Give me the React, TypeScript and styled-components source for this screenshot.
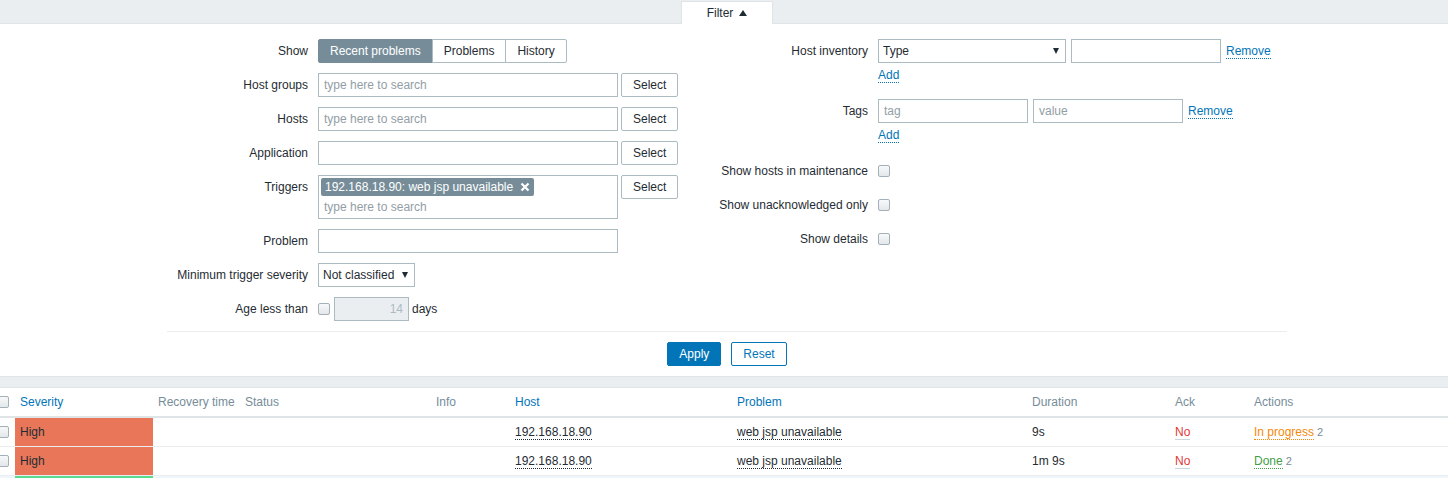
import React from "react";
import styled, { createGlobalStyle } from "styled-components";

const GlobalStyle = createGlobalStyle`
  html, body {
    margin: 0;
    padding: 0;
    background: #ffffff;
    overflow: hidden;
  }
  body {
    font-family: "Liberation Sans", Arial, sans-serif;
    font-size: 12px;
    color: #1f2c33;
  }
  * {
    box-sizing: border-box;
  }
`;

const Page = styled.div`
  width: 1470px;
  margin-left: -8px;
`;

const TabBar = styled.div`
  height: 24px;
  background: #ebeef0;
  border-bottom: 1px solid #dfe4e7;
  display: flex;
  justify-content: center;
`;

const Tab = styled.div`
  width: 92px;
  height: 23px;
  margin-top: 1px;
  background: #ffffff;
  border: 1px solid #dfe4e7;
  border-bottom: none;
  display: flex;
  align-items: center;
  justify-content: center;
  gap: 6px;
`;

const ArrowUp = styled.span`
  width: 0;
  height: 0;
  border-left: 4px solid transparent;
  border-right: 4px solid transparent;
  border-bottom: 6px solid #1f2c33;
`;

const FilterPanel = styled.div`
  background: #ffffff;
  border-bottom: 1px solid #dfe4e7;
  padding: 15px 0 10px;
`;

const FormWrap = styled.div`
  width: 1120px;
  margin: 0 auto;
`;

const Columns = styled.div`
  display: grid;
  grid-template-columns: 540px 580px;
`;

const Column = styled.div`
  display: flex;
  flex-direction: column;
  gap: 10px;
`;

const Row = styled.div`
  display: flex;
  align-items: flex-start;
  gap: 10px;
`;

const Label = styled.label<{ $w?: number }>`
  width: ${(p) => p.$w ?? 141}px;
  flex: none;
  text-align: right;
  line-height: 24px;
  white-space: nowrap;
`;

const Field = styled.div<{ $gap?: number }>`
  display: flex;
  align-items: flex-start;
  gap: ${(p) => p.$gap ?? 3}px;
  line-height: 24px;
`;

const Stack = styled.div`
  display: flex;
  flex-direction: column;
`;

const AddLine = styled.div`
  height: 26px;
  line-height: 24px;
`;

const Segments = styled.div`
  display: flex;
`;

const Segment = styled.span<{ $active?: boolean }>`
  height: 24px;
  line-height: 22px;
  padding: 0 11px;
  border: 1px solid ${(p) => (p.$active ? "#768d99" : "#acbbc2")};
  background: ${(p) => (p.$active ? "#768d99" : "#ffffff")};
  color: ${(p) => (p.$active ? "#ffffff" : "#1f2c33")};
  white-space: nowrap;
  & + & {
    margin-left: -1px;
  }
  &:first-child {
    border-radius: 2px 0 0 2px;
  }
  &:last-child {
    border-radius: 0 2px 2px 0;
  }
`;

const TextInput = styled.input<{ $w: number }>`
  width: ${(p) => p.$w}px;
  height: 24px;
  margin: 0;
  padding: 0 5px;
  border: 1px solid #acbbc2;
  border-radius: 0;
  font: inherit;
  color: #1f2c33;
  background: #ffffff;
  outline: none;
  &::placeholder {
    color: #929ea5;
  }
  &:disabled {
    background: #ebeef0;
    color: #acbbc2;
    text-align: right;
  }
`;

const Button = styled.button<{ $variant?: "grey" | "main" | "alt" }>`
  height: 24px;
  margin: 0;
  padding: 0 11px;
  font: inherit;
  line-height: 22px;
  border-radius: 2px;
  cursor: pointer;
  border: 1px solid
    ${(p) => (p.$variant === "grey" || !p.$variant ? "#acbbc2" : "#0275b8")};
  background: ${(p) => (p.$variant === "main" ? "#0275b8" : "#ffffff")};
  color: ${(p) =>
    p.$variant === "main" ? "#ffffff" : p.$variant === "alt" ? "#0275b8" : "#1f2c33"};
`;

const SelectBox = styled.div<{ $w: number }>`
  width: ${(p) => p.$w}px;
  height: 24px;
  border: 1px solid #acbbc2;
  padding: 0 6px 0 4px;
  display: flex;
  align-items: center;
  justify-content: space-between;
  line-height: 22px;
  background: #ffffff;
`;

const ArrowDown = styled.span`
  width: 0;
  height: 0;
  border-left: 3.5px solid transparent;
  border-right: 3.5px solid transparent;
  border-top: 6px solid #1f2c33;
`;

const MultiSelect = styled.div`
  width: 300px;
  height: 44px;
  border: 1px solid #acbbc2;
  padding: 2px 2px 0;
  display: flex;
  flex-direction: column;
  align-items: flex-start;
`;

const Chip = styled.span`
  height: 18px;
  padding: 0 4px;
  background: #768d99;
  color: #ffffff;
  border-radius: 2px;
  display: inline-flex;
  align-items: center;
  gap: 7px;
  line-height: 18px;
  white-space: nowrap;
`;

const MultiPlaceholder = styled.span`
  height: 22px;
  line-height: 22px;
  padding-left: 3px;
  color: #929ea5;
`;

const Check = styled.span`
  display: block;
  width: 12px;
  height: 12px;
  border: 1px solid #a3b0b7;
  border-radius: 2px;
  background: linear-gradient(#f7f8f9, #e4e8ea);
  flex: none;
`;

const CheckCell = styled.div`
  height: 24px;
  display: flex;
  align-items: center;
  gap: 4px;
`;

const Link = styled.a`
  color: #0275b8;
  text-decoration: none;
  border-bottom: 1px dotted #0275b8;
  cursor: pointer;
`;

const Footer = styled.div`
  margin-top: 10px;
  padding-top: 10px;
  border-top: 1px solid #ebeef0;
  display: flex;
  justify-content: center;
  gap: 10px;
`;

const Band = styled.div`
  height: 11px;
  background: #ebeef0;
  border-bottom: 1px solid #dfe4e7;
`;

const Table = styled.table`
  width: 100%;
  table-layout: fixed;
  border-collapse: separate;
  border-spacing: 0;
  background: #ffffff;
`;

const Th = styled.th<{ $sort?: boolean }>`
  text-align: left;
  font-weight: normal;
  padding: 6px 5px;
  line-height: 16px;
  color: ${(p) => (p.$sort ? "#0275b8" : "#768d99")};
  border-bottom: 2px solid #dfe4e7;
  vertical-align: middle;
  white-space: nowrap;
  overflow: hidden;
`;

const Td = styled.td<{ $bg?: string }>`
  padding: 6px 5px;
  line-height: 16px;
  height: 29px;
  border-bottom: 1px solid #ebeef0;
  vertical-align: middle;
  white-space: nowrap;
  background: ${(p) => p.$bg ?? "transparent"};
`;

const Tr = styled.tr<{ $bg?: string }>`
  background: ${(p) => p.$bg ?? "#ffffff"};
`;

const Dotted = styled.span<{ $color?: string }>`
  color: ${(p) => p.$color ?? "#1f2c33"};
  border-bottom: 1px dotted ${(p) => p.$color ?? "#1f2c33"};
`;

const AckNo = styled.span`
  color: #e33734;
  border-bottom: 1px solid #ccd5d9;
`;

const Count = styled.span`
  color: #768d99;
  font-size: 11px;
  margin-left: 3px;
`;

const CloseIcon = () => (
  <svg width="10" height="10" viewBox="0 0 10 10">
    <path d="M1.5 1.5 L8.5 8.5 M8.5 1.5 L1.5 8.5" stroke="#ffffff" strokeWidth="2.2" />
  </svg>
);

const cols = [23, 138, 87, 191, 79, 222, 295, 143, 79];

const problems = [
  { duration: "9s", action: "In progress", actionColor: "#f48909", count: 2 },
  { duration: "1m 9s", action: "Done", actionColor: "#429e47", count: 2 },
];

const RIGHT_LABEL = 161;

const App = () => {
  return (
    <Page>
      <GlobalStyle />
      <TabBar>
        <Tab>
          Filter
          <ArrowUp />
        </Tab>
      </TabBar>
      <FilterPanel>
        <FormWrap>
          <Columns>
            <Column>
              <Row>
                <Label>Show</Label>
                <Segments>
                  <Segment $active>Recent problems</Segment>
                  <Segment>Problems</Segment>
                  <Segment>History</Segment>
                </Segments>
              </Row>
              <Row>
                <Label>Host groups</Label>
                <Field>
                  <TextInput $w={300} placeholder="type here to search" />
                  <Button $variant="grey">Select</Button>
                </Field>
              </Row>
              <Row>
                <Label>Hosts</Label>
                <Field>
                  <TextInput $w={300} placeholder="type here to search" />
                  <Button $variant="grey">Select</Button>
                </Field>
              </Row>
              <Row>
                <Label>Application</Label>
                <Field>
                  <TextInput $w={300} />
                  <Button $variant="grey">Select</Button>
                </Field>
              </Row>
              <Row>
                <Label>Triggers</Label>
                <Field>
                  <MultiSelect>
                    <Chip>
                      192.168.18.90: web jsp unavailable
                      <CloseIcon />
                    </Chip>
                    <MultiPlaceholder>type here to search</MultiPlaceholder>
                  </MultiSelect>
                  <Button $variant="grey">Select</Button>
                </Field>
              </Row>
              <Row>
                <Label>Problem</Label>
                <Field>
                  <TextInput $w={300} />
                </Field>
              </Row>
              <Row>
                <Label>Minimum trigger severity</Label>
                <SelectBox $w={97}>
                  Not classified
                  <ArrowDown />
                </SelectBox>
              </Row>
              <Row>
                <Label>Age less than</Label>
                <CheckCell>
                  <Check />
                  <Field>
                    <TextInput $w={75} disabled defaultValue="14" />
                    <span>days</span>
                  </Field>
                </CheckCell>
              </Row>
            </Column>
            <Column>
              <Row>
                <Label $w={RIGHT_LABEL}>Host inventory</Label>
                <Stack>
                  <Field $gap={5}>
                    <SelectBox $w={188}>
                      Type
                      <ArrowDown />
                    </SelectBox>
                    <TextInput $w={150} />
                    <span>
                      <Link>Remove</Link>
                    </span>
                  </Field>
                  <AddLine>
                    <Link>Add</Link>
                  </AddLine>
                </Stack>
              </Row>
              <Row>
                <Label $w={RIGHT_LABEL}>Tags</Label>
                <Stack>
                  <Field $gap={5}>
                    <TextInput $w={150} placeholder="tag" />
                    <TextInput $w={150} placeholder="value" />
                    <span>
                      <Link>Remove</Link>
                    </span>
                  </Field>
                  <AddLine>
                    <Link>Add</Link>
                  </AddLine>
                </Stack>
              </Row>
              <Row>
                <Label $w={RIGHT_LABEL}>Show hosts in maintenance</Label>
                <CheckCell>
                  <Check />
                </CheckCell>
              </Row>
              <Row>
                <Label $w={RIGHT_LABEL}>Show unacknowledged only</Label>
                <CheckCell>
                  <Check />
                </CheckCell>
              </Row>
              <Row>
                <Label $w={RIGHT_LABEL}>Show details</Label>
                <CheckCell>
                  <Check />
                </CheckCell>
              </Row>
            </Column>
          </Columns>
          <Footer>
            <Button $variant="main">Apply</Button>
            <Button $variant="alt">Reset</Button>
          </Footer>
        </FormWrap>
      </FilterPanel>
      <Band />
      <Table>
        <colgroup>
          {cols.map((w, i) => (
            <col key={i} style={{ width: w }} />
          ))}
          <col />
        </colgroup>
        <thead>
          <tr>
            <Th>
              <Check />
            </Th>
            <Th $sort>Severity</Th>
            <Th>Recovery time</Th>
            <Th>Status</Th>
            <Th>Info</Th>
            <Th $sort>Host</Th>
            <Th $sort>Problem</Th>
            <Th>Duration</Th>
            <Th>Ack</Th>
            <Th>Actions</Th>
          </tr>
        </thead>
        <tbody>
          {problems.map((p, i) => (
            <Tr key={i}>
              <Td>
                <Check />
              </Td>
              <Td $bg="#e97659">High</Td>
              <Td />
              <Td />
              <Td />
              <Td>
                <Dotted>192.168.18.90</Dotted>
              </Td>
              <Td>
                <Dotted>web jsp unavailable</Dotted>
              </Td>
              <Td>{p.duration}</Td>
              <Td>
                <AckNo>No</AckNo>
              </Td>
              <Td>
                <Dotted $color={p.actionColor}>{p.action}</Dotted>
                <Count>{p.count}</Count>
              </Td>
            </Tr>
          ))}
          <Tr $bg="#eef5fb">
            <Td />
            <Td $bg="#59db8f" />
            <Td />
            <Td />
            <Td />
            <Td />
            <Td />
            <Td />
            <Td />
            <Td />
          </Tr>
        </tbody>
      </Table>
    </Page>
  );
};

export default App;
